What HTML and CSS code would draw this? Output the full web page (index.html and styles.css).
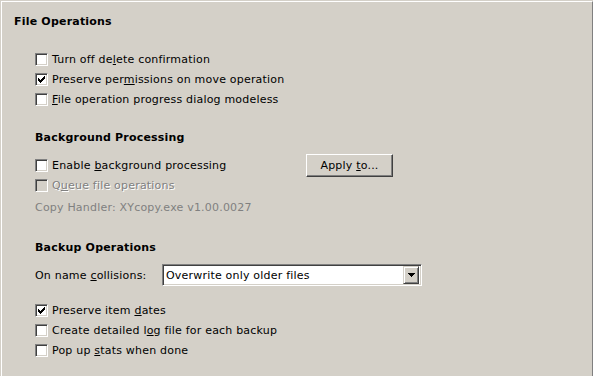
FILE: index.html
```html
<!DOCTYPE html>
<html>
<head>
<meta charset="utf-8">
<link rel="stylesheet" href="styles.css">
</head>
<body>
<div class="panel">
  <div class="heading top">File Operations</div>
  <div class="group">
    <div class="row"><span class="box"></span><span class="label">Turn off de<u>l</u>ete confirmation</span></div>
    <div class="row"><span class="box checked"><svg width="7" height="7" viewBox="0 0 7 7"><path d="M0 2h1v3H0zM1 3h1v3H1zM2 4h1v3H2zM3 3h1v3H3zM4 2h1v3H4zM5 1h1v3H5zM6 0h1v3H6z" fill="#000"/></svg></span><span class="label">Preserve per<u>m</u>issions on move operation</span></div>
    <div class="row"><span class="box"></span><span class="label"><u>F</u>ile operation progress dialog modeless</span></div>
  </div>

  <div class="heading sub">Background Processing</div>
  <div class="group">
    <div class="row first">
      <div class="check"><span class="box"></span><span class="label">Enable <u>b</u>ackground processing</span></div>
      <button class="btn">Apply <u>t</u>o...</button>
    </div>
    <div class="row disabled"><span class="box"></span><span class="label">Q<u>u</u>eue file operations</span></div>
    <div class="note">Copy Handler: XYcopy.exe v1.00.0027</div>
  </div>

  <div class="heading sub backup">Backup Operations</div>
  <div class="group">
    <div class="combo-row">
      <span class="combo-label">On name <u>c</u>ollisions:</span>
      <div class="combo">
        <span class="combo-text">Overwrite only older files</span>
        <span class="combo-btn"><svg width="7" height="4" viewBox="0 0 7 4"><path d="M0 0h7v1H0zM1 1h5v1H1zM2 2h3v1H2zM3 3h1v1H3z" fill="#000"/></svg></span>
      </div>
    </div>
    <div class="row first2"><span class="box checked"><svg width="7" height="7" viewBox="0 0 7 7"><path d="M0 2h1v3H0zM1 3h1v3H1zM2 4h1v3H2zM3 3h1v3H3zM4 2h1v3H4zM5 1h1v3H5zM6 0h1v3H6z" fill="#000"/></svg></span><span class="label">Preserve item <u>d</u>ates</span></div>
    <div class="row"><span class="box"></span><span class="label">Create detailed l<u>o</u>g file for each backup</span></div>
    <div class="row"><span class="box"></span><span class="label">Pop up <u>s</u>tats when done</span></div>
  </div>
</div>
</body>
</html>
```
FILE: styles.css
```css
html, body {
  margin: 0;
  padding: 0;
  background: #d4d0c8;
  height: 100%;
  overflow: hidden;
}
body {
  font-family: "DejaVu Sans", Verdana, sans-serif;
  font-size: 11px;
  letter-spacing: 0.2px;
  color: #000;
  padding-top: 1px;
  padding-left: 1px;
  box-sizing: border-box;
}
.panel {
  border-top: 1px solid #fff;
  border-left: 1px solid #fff;
  border-right: 1px solid #808080;
  height: 100%;
  box-sizing: border-box;
  padding-left: 12px;
  padding-top: 13px;
}
.heading {
  font-weight: bold;
  line-height: 13px;
}
.heading.sub {
  margin-left: 21px;
  margin-top: 22px;
}
.heading.backup {
  margin-top: 27px;
}
.group {
  margin-left: 21px;
}
.heading.top + .group {
  margin-top: 21px;
}
.row {
  display: flex;
  align-items: center;
  height: 20px;
  line-height: 13px;
}
.row.first {
  margin-top: 11px;
  width: 358px;
  justify-content: space-between;
}
.check {
  display: flex;
  align-items: center;
}
.box {
  width: 13px;
  height: 13px;
  box-sizing: border-box;
  background: #fff;
  border-top: 1px solid #808080;
  border-left: 1px solid #808080;
  border-right: 1px solid #fff;
  border-bottom: 1px solid #fff;
  box-shadow: inset 1px 1px 0 #404040, inset -1px -1px 0 #d4d0c8;
  flex: none;
  display: flex;
  padding: 2px 0 0 2px;
}
.box svg { display: block; }
.label {
  margin-left: 4px;
  white-space: nowrap;
}
.disabled .box {
  background: #d4d0c8;
}
.disabled .label {
  color: #808080;
  text-shadow: 1px 1px 0 #fff;
}
.note {
  color: #808080;
  line-height: 13px;
  margin-top: 6px;
}
.btn {
  font: inherit;
  letter-spacing: 0.2px;
  color: #000;
  width: 87px;
  height: 23px;
  padding: 0;
  margin: 0;
  background: #d4d0c8;
  border-top: 1px solid #fff;
  border-left: 1px solid #fff;
  border-right: 1px solid #404040;
  border-bottom: 1px solid #404040;
  box-shadow: inset -1px -1px 0 #808080;
  box-sizing: border-box;
  flex: none;
}
.combo-row {
  display: flex;
  align-items: center;
  margin-top: 10px;
  height: 22px;
}
.combo-label {
  width: 127px;
  white-space: nowrap;
}
.combo {
  width: 260px;
  height: 22px;
  box-sizing: border-box;
  background: #fff;
  border-top: 1px solid #808080;
  border-left: 1px solid #808080;
  border-right: 1px solid #fff;
  border-bottom: 1px solid #fff;
  box-shadow: inset 1px 1px 0 #404040, inset -1px -1px 0 #d4d0c8;
  display: flex;
  align-items: center;
  padding: 2px;
}
.combo-text {
  flex: 1;
  padding-left: 1px;
  white-space: nowrap;
}
.combo-btn {
  width: 16px;
  height: 18px;
  box-sizing: border-box;
  background: #d4d0c8;
  border-top: 1px solid #d4d0c8;
  border-left: 1px solid #d4d0c8;
  border-right: 1px solid #404040;
  border-bottom: 1px solid #404040;
  box-shadow: inset 1px 1px 0 #fff, inset -1px -1px 0 #808080;
  display: flex;
  align-items: center;
  justify-content: center;
}
.combo-btn svg { display: block; }
.row.first2 {
  margin-top: 14px;
}
```
